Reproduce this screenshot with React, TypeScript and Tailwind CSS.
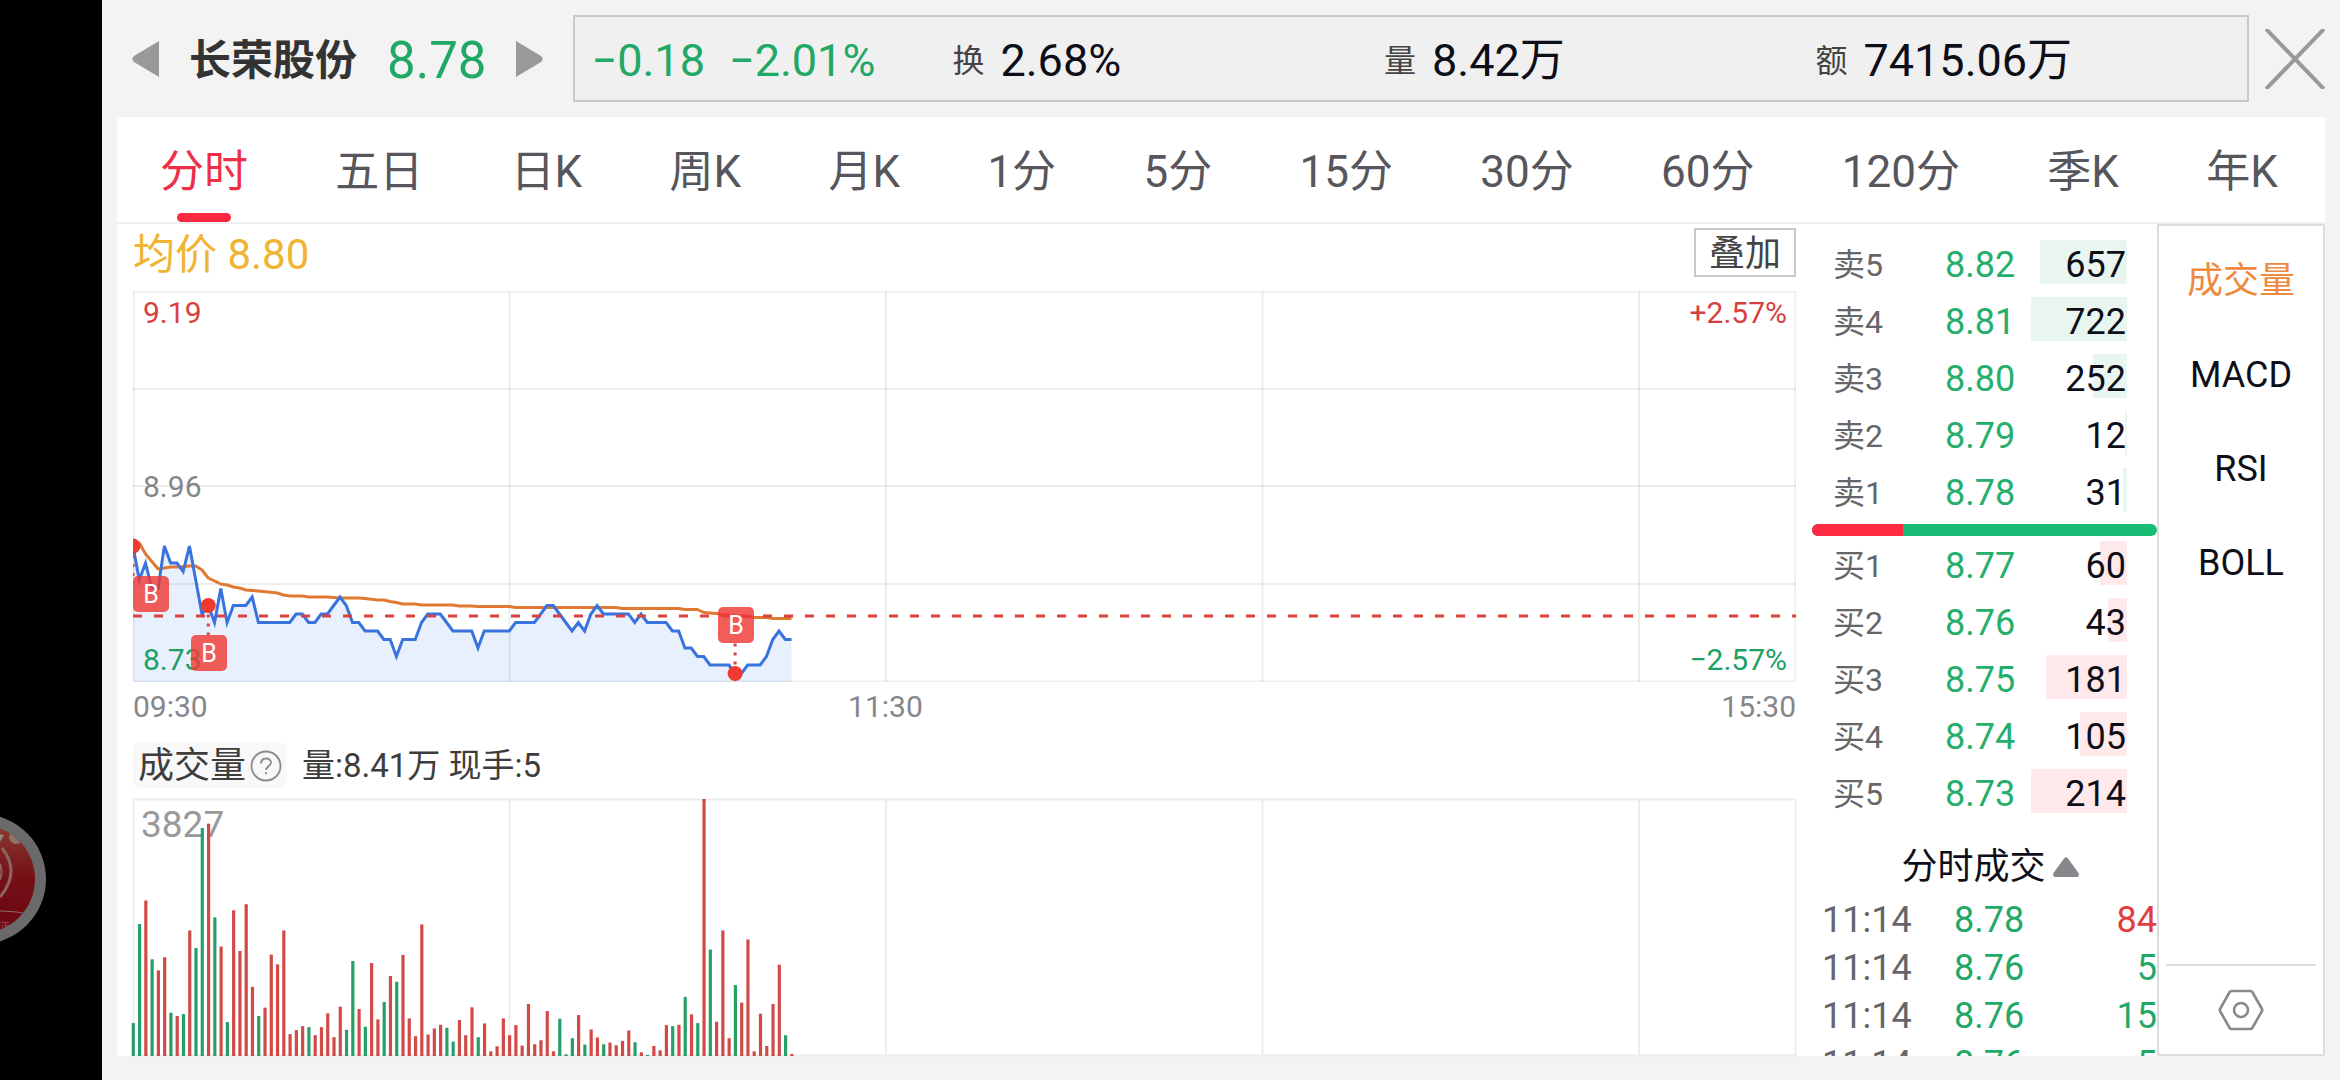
import React, { useState } from 'react';
import clsx from 'clsx';

type Side = 'sell' | 'buy';

interface Level {
  label: string;
  price: string;
  qty: number;
}

const PERIODS = ['分时', '五日', '日K', '周K', '月K', '1分', '5分', '15分', '30分', '60分', '120分', '季K', '年K'];
const INDICATORS = ['成交量', 'MACD', 'RSI', 'BOLL'];

const STATS = [
  { label: '换', value: '2.68%' },
  { label: '量', value: '8.42万' },
  { label: '额', value: '7415.06万' },
];

const SELL: Level[] = [
  { label: '卖5', price: '8.82', qty: 657 },
  { label: '卖4', price: '8.81', qty: 722 },
  { label: '卖3', price: '8.80', qty: 252 },
  { label: '卖2', price: '8.79', qty: 12 },
  { label: '卖1', price: '8.78', qty: 31 },
];

const BUY: Level[] = [
  { label: '买1', price: '8.77', qty: 60 },
  { label: '买2', price: '8.76', qty: 43 },
  { label: '买3', price: '8.75', qty: 181 },
  { label: '买4', price: '8.74', qty: 105 },
  { label: '买5', price: '8.73', qty: 214 },
];

const TICKS = [
  { time: '11:14', price: '8.78', qty: 84, up: true },
  { time: '11:14', price: '8.76', qty: 5, up: false },
  { time: '11:14', price: '8.76', qty: 15, up: false },
  { time: '11:14', price: '8.76', qty: 5, up: false },
];

// one price per minute from 09:30, in cents
const PRICES = [
  889, 885, 887, 884, 884, 889, 887, 887, 886, 889, 885, 881, 882, 880, 884, 880, 882, 882, 882, 883,
  880, 880, 880, 880, 880, 880, 881, 881, 880, 880, 881, 881, 882, 883, 882, 880, 880, 879, 879, 879,
  878, 878, 876, 878, 878, 878, 880, 881, 881, 881, 880, 879, 879, 879, 879, 877, 879, 879, 879, 879,
  879, 880, 880, 880, 880, 881, 882, 882, 881, 880, 879, 880, 879, 881, 882, 881, 881, 881, 881, 881,
  880, 881, 880, 880, 880, 880, 879, 879, 877, 877, 876, 876, 875, 875, 875, 875, 874, 874, 875, 875,
  875, 876, 878, 879, 878, 878,
];

// volume per minute, negative = falling minute
const VOLUMES = [
  -490, -1965, 2315, -1440, 1275, 1470, -645, 595, -625, 1870, -1610, -3395, 3460, -2065, 1630, -505, 2170, 1565, 2260, 1030,
  -595, 720, 1510, 1365, 1870, 325, 385, 445, -430, 310, 430, 635, 280, 735, -390, -1415, 700, -435, 1385, 545,
  -805, 1190, -1105, 1505, 560, 295, 1960, 320, 410, 465, -420, -215, 535, 310, 725, -280, 485, 70, 145, 560,
  310, 460, 155, 775, 175, 235, 670, 70, -555, -25, -265, 610, -170, 395, 275, -175, 200, 160, 225, 380,
  -205, 55, -15, 150, 85, 460, -445, 465, -880, 620, -490, 3827, -1585, 510, 1870, 265, -1055, 795, 1735, 70,
  630, 150, 775, 1360, -310, 30,
];

// [minute, y] of the average price line
const AVERAGE: [number, number][] = [
  [0, 254], [1, 252], [2, 263], [4, 278], [6, 276], [7.5, 276], [9, 275], [10, 275], [11, 279], [12, 287],
  [13, 290], [14, 293], [15, 294], [16, 296], [17, 297], [18, 299], [20, 300], [23, 302], [24, 304], [25, 305],
  [27, 305], [28, 306], [31, 306], [33, 307], [36, 307], [37, 307.5], [39, 309], [40, 309], [41, 310.5], [42, 311.5],
  [43, 313], [45, 313], [46, 314], [51, 314], [52, 315], [54, 315], [55, 315.5], [60, 315.5], [61, 316.5], [77, 316.5],
  [78, 317.5], [87, 317.5], [88, 318.5], [90, 318.5], [91, 321.5], [93, 322.5], [94, 323.5], [98, 325.5], [99, 326.5],
  [101, 326.5], [102, 327.5], [105, 327.5],
];

// buy markers: dot on the price line, badge above or below it
const MARKERS = [
  { minute: 0, price: 889, x: 0, y: 285 },
  { minute: 12, price: 882, x: 58, y: 344 },
  { minute: 96, price: 874, x: 585, y: 316 },
];

const WIDTH = 1663;
const PRICE_HEIGHT = 391;
const VOLUME_HEIGHT = 256;
const HOURS = [376.5, 753, 1129.5, 1506];

const minuteX = (minute: number) => minute * 6.272;
const priceY = (cents: number) => PRICE_HEIGHT - (cents - 873) * 8.5;

const PriceChart: React.FC = () => {
  const line = PRICES.map((p, i) => `${minuteX(i)},${priceY(p)}`).join(' ');
  const average = AVERAGE.map(([m, y]) => `${minuteX(m)},${y}`).join(' ');
  const lastX = minuteX(PRICES.length - 1);

  return (
    <div className="relative h-[391px]">
      <svg className="block w-full h-full" viewBox={`0 0 ${WIDTH} ${PRICE_HEIGHT}`} preserveAspectRatio="none">
        <polygon points={`0,${PRICE_HEIGHT} ${line} ${lastX},${PRICE_HEIGHT}`} fill="#e8f0fe" />
        <g stroke="#000" strokeOpacity="0.07" strokeWidth="2" fill="none">
          <rect x="0.5" y="0.5" width={WIDTH - 1} height={PRICE_HEIGHT - 1} />
          {[98, 195, 293].map((y) => <line key={y} x1="0" x2={WIDTH} y1={y} y2={y} />)}
          {HOURS.map((x) => <line key={x} x1={x} x2={x} y1="0" y2={PRICE_HEIGHT} />)}
        </g>
        <polyline points={average} fill="none" stroke="#e07a32" strokeWidth="3" strokeLinejoin="round" />
        <polyline points={line} fill="none" stroke="#3974de" strokeWidth="3" />
        <line x1="0" x2={WIDTH} y1="325" y2="325" stroke="#d8423f" strokeWidth="3" strokeDasharray="9 12" />
      </svg>
      <span className="absolute left-[10px] top-1 text-[30px] leading-9 text-[#d8403e]">9.19</span>
      <span className="absolute left-[10px] top-[178px] text-[30px] leading-9 text-[#858589]">8.96</span>
      <span className="absolute left-[10px] bottom-1 text-[30px] leading-9 text-[#1ba164]">8.73</span>
      <span className="absolute right-[9px] top-1 text-[30px] leading-9 text-[#d8403e]">+2.57%</span>
      <span className="absolute right-[9px] bottom-1 text-[30px] leading-9 text-[#1ba164]">−2.57%</span>
      <svg className="absolute inset-0 w-full h-full" viewBox={`0 0 ${WIDTH} ${PRICE_HEIGHT}`} preserveAspectRatio="none">
        {MARKERS.map((m) => (
          <g key={m.minute}>
            <line
              x1={minuteX(m.minute)}
              x2={minuteX(m.minute)}
              y1={priceY(m.price)}
              y2={m.y > priceY(m.price) ? m.y : m.y + 36}
              stroke="#d8423f"
              strokeWidth="3"
              strokeDasharray="3 6"
            />
            <circle cx={minuteX(m.minute)} cy={priceY(m.price)} r="7.5" fill="#f03a2f" />
            <rect x={m.x} y={m.y} width="36" height="36" rx="5" fill="#ee3b35" fillOpacity="0.82" />
            <text x={m.x + 18} y={m.y + 27} fontSize="25" textAnchor="middle" fill="#fff">B</text>
          </g>
        ))}
      </svg>
    </div>
  );
};

const VolumeChart: React.FC = () => (
  <div className="relative flex-1 min-h-0">
    <span className="absolute left-2 top-1 text-[37px] leading-[44px] text-[#999]">3827</span>
    <svg className="absolute inset-0 w-full h-full" viewBox={`0 0 ${WIDTH} ${VOLUME_HEIGHT}`} preserveAspectRatio="none" overflow="visible">
      <g stroke="#ededed" strokeWidth="2" fill="none">
        <rect x="0.5" y="0.5" width={WIDTH - 1} height={VOLUME_HEIGHT - 1} />
        {HOURS.map((x) => <line key={x} x1={x} x2={x} y1="0" y2={VOLUME_HEIGHT} />)}
      </g>
      {VOLUMES.map((v, i) => {
        const height = (Math.abs(v) / 3827) * VOLUME_HEIGHT;
        return (
          <rect
            key={i}
            x={minuteX(i) - 1.3}
            y={VOLUME_HEIGHT - height}
            width="3.2"
            height={height}
            fill={v > 0 ? '#d14a48' : '#26a069'}
          />
        );
      })}
    </svg>
  </div>
);

const OrderTable: React.FC<{ side: Side; levels: Level[] }> = ({ side, levels }) => {
  const max = Math.max(...levels.map((l) => l.qty));

  return (
    <table className="w-full table-fixed text-[36px] leading-[44px]">
      <tbody>
        {levels.map((level) => (
          <tr key={level.label} className="h-[57px]">
            <th scope="row" className="w-[149px] p-0 pl-[37px] text-left text-[32px] font-normal text-[#66666a]">{level.label}</th>
            <td className="p-0 text-[#26ae6c]">{level.price}</td>
            <td className="relative w-[130px] p-0 pr-[31px] text-right text-[#0e0e18]">
              <div
                className={clsx('absolute right-[30px] top-1 h-11', side === 'sell' ? 'bg-[#e8f6ef]' : 'bg-[#ffe9ea]')}
                style={{ width: Math.max(2, Math.round((level.qty / max) * 96)) }}
              />
              <span className="relative">{level.qty}</span>
            </td>
          </tr>
        ))}
      </tbody>
    </table>
  );
};

const Header: React.FC = () => (
  <header className="flex items-center gap-4 h-[117px] pl-[30px] pr-[15px]">
    <div className="flex items-center gap-[30px] pr-[14px]">
      <button aria-label="上一只">
        <svg className="block" width="27" height="36" viewBox="0 0 27 36"><path d="M27 0v36L2 21Q-1.500 18 2 15Z" fill="#999" /></svg>
      </button>
      <h1 className="pt-1 text-[42px] leading-[50px] font-bold text-[#333]">长荣股份</h1>
      <span className="pt-1 text-[51px] leading-[60px] text-[#1fa866]">8.78</span>
      <button aria-label="下一只">
        <svg className="block" width="27" height="36" viewBox="0 0 27 36"><path d="M0 0v36L25 21Q28.500 18 25 15Z" fill="#999" /></svg>
      </button>
    </div>
    <div className="flex items-center flex-1 h-[87px] pt-1 border-2 border-[#c9c9c9] bg-[#f0f0f0] text-[45px] leading-[54px]">
      <div className="flex gap-6 w-[377px] pl-4 text-[#1fa866]">
        <span>−0.18</span>
        <span>−2.01%</span>
      </div>
      {STATS.map((s) => (
        <div key={s.label} className="flex flex-1 items-center gap-4 text-[#0e0e18]">
          <span className="text-[32px] text-[#444]">{s.label}</span>
          <span>{s.value}</span>
        </div>
      ))}
    </div>
    <button aria-label="关闭">
      <svg className="block" width="60" height="60" viewBox="0 0 60 60"><path d="M1 0 59 60M59 0 1 60" stroke="#999" strokeWidth="4" /></svg>
    </button>
  </header>
);

// round assistant button, half hidden behind the screen edge
const FloatingBall: React.FC = () => (
  <svg className="absolute left-0 top-[814px]" width="47" height="130" viewBox="0 0 47 130">
    <defs>
      <linearGradient id="ball" x1="0" y1="0" x2="0" y2="1">
        <stop offset="0" stopColor="#8c3a30" />
        <stop offset="0.5" stopColor="#740f16" />
        <stop offset="1" stopColor="#6c0710" />
      </linearGradient>
      <clipPath id="ballClip"><circle cx="-19" cy="65" r="54" /></clipPath>
    </defs>
    <circle cx="-19" cy="65" r="65" fill="#6a6a6a" />
    <circle cx="-19" cy="65" r="54" fill="url(#ball)" />
    <g clipPath="url(#ballClip)">
      <circle cx="16" cy="23" r="7" fill="#8f7168" />
      <path d="M14 20l5 6" stroke="#6d3a33" strokeWidth="2" />
      <path d="M0 28 4 21-4 20Z" fill="#908882" />
      <path d="M2 34Q21 58 0 83" fill="none" stroke="#8a6461" strokeWidth="3" />
      <path d="M0 50Q3 58 0 66" fill="none" stroke="#8a6461" strokeWidth="2" />
      <path d="M0 97q14 0 30 3" fill="none" stroke="#8a6a6a" strokeWidth="1" />
      <text x="0" y="116" fontSize="10" fill="#8a5a5c">正</text>
    </g>
  </svg>
);

export default function App() {
  const [period, setPeriod] = useState('分时');
  const [indicator, setIndicator] = useState('成交量');

  return (
    <div className="flex h-screen overflow-hidden bg-[#f3f3f3] font-['Roboto','Noto_Sans_CJK_SC',sans-serif]">
      <aside className="relative w-[102px] shrink-0 bg-black">
        <FloatingBall />
      </aside>

      <div className="flex flex-col flex-1 min-w-0">
        <Header />

        <main className="flex flex-col flex-1 min-h-0 ml-[15px] mr-[15px] mb-6 bg-white">
          <nav className="flex shrink-0 justify-between h-[107px] pl-[43px] pr-[47px] border-b-2 border-[#efefef]">
            {PERIODS.map((p) => (
              <button
                key={p}
                onClick={() => setPeriod(p)}
                className={clsx('relative pt-1 text-[44px]', p === period ? 'text-[#ee2f47]' : 'text-[#56565c]')}
              >
                {p}
                {p === period && <span className="absolute bottom-0 left-[17px] w-[54px] h-[9px] rounded-full bg-[#fc2a41]" />}
              </button>
            ))}
          </nav>

          <div className="flex flex-1 min-h-0">
            {/* Charts */}
            <section className="flex flex-col flex-1 min-w-0 pl-4">
              <div className="flex items-start justify-between h-[67px] pt-1">
                <span className="text-[42px] leading-[54px] text-[#f0b432]">均价 8.80</span>
                <button className="w-[102px] h-[49px] pt-[2px] border-2 border-[#c8c8c8] text-[36px] leading-[44px] text-[#444]">叠加</button>
              </div>
              <PriceChart />
              <div className="flex h-[50px] text-[30px] leading-[50px] text-[#86868b]">
                <span className="w-[43%]">09:30</span>
                <span>11:30</span>
                <span className="ml-auto">15:30</span>
              </div>
              <div className="flex items-center gap-4 h-[46px] mt-[10px] mb-[11px]">
                <button className="flex items-center gap-1 h-full pt-[2px] pl-[5px] pr-1 rounded-md bg-[#f8f8f8] text-[36px] leading-[44px] text-[#3d3d3d]">
                  成交量
                  <svg width="32" height="32" viewBox="0 0 32 32" fill="none" stroke="#8a8a8f" strokeWidth="1.800">
                    <circle cx="16" cy="16" r="14.500" />
                    <path d="M11 13.500c0-6.500 10-6.500 10-1 0 3.500-5 4-5 7.500" />
                    <path d="M16 22v2.200" />
                  </svg>
                </button>
                <span className="pt-[2px] text-[33px] leading-[44px] text-[#3d3d3d]">量:8.41万 现手:5</span>
              </div>
              <VolumeChart />
            </section>

            {/* Order book */}
            <section className="flex flex-col w-[361px] shrink-0 pt-3 overflow-hidden">
              <OrderTable side="sell" levels={SELL} />
              <div className="flex h-3 ml-4 mt-[3px] mb-px shrink-0 rounded-full overflow-hidden bg-[#1abb74]">
                <div className="w-[91px] bg-[#fd2a41]" />
              </div>
              <OrderTable side="buy" levels={BUY} />
              <button className="flex shrink-0 items-center justify-center gap-[7px] h-[58px] mt-4 pl-[27px] text-[36px] text-[#0e0e18]">
                分时成交
                <svg width="26" height="20" viewBox="0 0 26 20"><path d="M11 1.500Q13-1 15 1.500L25.500 16Q27 20 23 20H3Q-1 20 .5 16Z" fill="#87878d" /></svg>
              </button>
              <div className="flex-1 min-h-0 overflow-hidden">
                <table className="w-full table-fixed text-[36px] leading-[44px]">
                  <tbody>
                    {TICKS.map((t, i) => (
                      <tr key={i} className="h-12">
                        <td className="w-[158px] p-0 pl-[26px] text-[#66666a]">{t.time}</td>
                        <td className="p-0 text-[#1fa866]">{t.price}</td>
                        <td className={clsx('p-0 text-right', t.up ? 'text-[#e03e3e]' : 'text-[#1fa866]')}>{t.qty}</td>
                      </tr>
                    ))}
                  </tbody>
                </table>
              </div>
            </section>

            {/* Indicators */}
            <aside className="flex flex-col w-[168px] shrink-0 border-2 border-[#dcdcdc] pt-2">
              {INDICATORS.map((name) => (
                <button
                  key={name}
                  onClick={() => setIndicator(name)}
                  className={clsx('h-[94px] text-[36px]', name === indicator ? 'text-[#ee8a3e]' : 'text-[#0e0e18]')}
                >
                  {name}
                </button>
              ))}
              <button aria-label="设置" className="flex items-center justify-center h-[90px] mt-auto mx-[7px] border-t-2 border-[#dcdcdc]">
                <svg width="46" height="42" viewBox="0 0 46 42" fill="none" stroke="#88888d" strokeWidth="2.600" strokeLinejoin="round">
                  <path d="M13.500 2h19q1.200 0 1.800 1L44 20q.5 1 0 2l-9.700 17q-.6 1-1.800 1h-19q-1.200 0-1.800-1L2 22q-.5-1 0-2L11.700 3q.6-1 1.800-1Z" />
                  <circle cx="23" cy="21" r="7" />
                </svg>
              </button>
            </aside>
          </div>
        </main>
      </div>
    </div>
  );
}
